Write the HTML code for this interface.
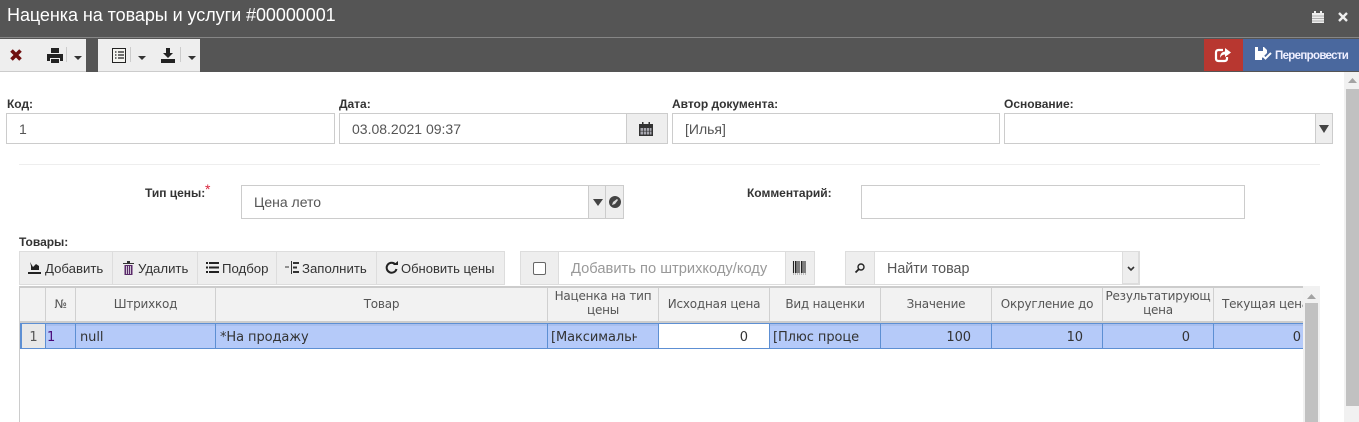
<!DOCTYPE html>
<html lang="ru"><head><meta charset="utf-8"><style>
html,body{margin:0;padding:0;width:1359px;height:422px;overflow:hidden;background:#fff}
body{font-family:"Liberation Sans",sans-serif;color:#333;position:relative}
div,span{position:absolute;box-sizing:border-box;white-space:nowrap}
svg{position:absolute;overflow:visible}
.lb{font-size:12px;font-weight:bold;color:#333;line-height:14px;letter-spacing:-.02px}
.in{border:1px solid #ccc;background:#fff;font-size:14px;color:#555;line-height:30px;padding-left:12px}
.ad{background:#eee;border:1px solid #ccc}
.tb{top:251px;height:34px;background:#eee;border:1px solid #ddd;border-right:0;font-size:13.2px;color:#333;line-height:34px}
.th{top:288px;height:35px;background:#f2f2f2;border-right:1px solid #d0d0d0;border-bottom:2px solid #ccc;font:12px/13.5px "DejaVu Sans",sans-serif;color:#555;text-align:center;overflow:hidden;letter-spacing:-.22px}
.td{top:323px;height:26px;background:#b5caf9;border-right:1px solid #5d8fd3;border-top:1px solid #5d8fd3;border-bottom:1px solid #5d8fd3;box-shadow:inset 0 2px 0 #a9bfee;font:13px/27px "DejaVu Sans",sans-serif;letter-spacing:-.08px;color:#333;padding:0 4px;overflow:hidden}
.r{text-align:right}
.c{left:3px;top:0;width:86px;height:24px;overflow:hidden}
</style></head><body>
<div style="left:0;top:0;width:1359px;height:72px;background:#555"></div>
<div style="left:0;top:37px;width:1359px;height:1px;background:#868686"></div>
<div style="left:7px;top:4px;font-size:18px;line-height:22px;color:#fff;letter-spacing:-.06px">Наценка на товары и услуги #00000001</div>
<svg style="left:1311px;top:11px" width="14" height="13" viewBox="0 0 14 13"><path d="M1 2h12v10H1z" fill="#eee"/><path d="M3 0h2v3H3zM9 0h2v3H9z" fill="#eee"/><path d="M1 5h12M1 7.500h12M1 10h12" stroke="#999" stroke-width=".7"/></svg>
<svg style="left:1338px;top:12px" width="10" height="10" viewBox="0 0 10 10"><path d="M1 1l8 8M9 1l-8 8" stroke="#eee" stroke-width="2.400"/></svg>

<div style="left:0;top:39px;width:86px;height:32px;background:#eee"></div>
<div style="left:98px;top:39px;width:102px;height:32px;background:#eee"></div>
<div style="left:0;top:71px;width:86px;height:1px;background:#ccc"></div><div style="left:98px;top:71px;width:102px;height:1px;background:#ccc"></div>
<svg style="left:10px;top:49px" width="12" height="12" viewBox="0 0 12 12"><path d="M1.500 1.500l9 9M10.500 1.500l-9 9" stroke="#6f0f0f" stroke-width="3.600"/></svg>
<svg style="left:47px;top:48px" width="16" height="16" viewBox="0 0 16 16"><path d="M4 0h8v5H4zM0 6h16v7h-3v-3H3v3H0zM4 11h8v4H4z" fill="#222"/></svg>
<div style="left:66px;top:47px;width:1px;height:15px;background:#ccc"></div>
<svg style="left:74px;top:56px" width="8" height="4"><path d="M0 0h8L4 4z" fill="#333"/></svg>
<svg style="left:112px;top:48px" width="15" height="15" viewBox="0 0 15 15"><path d="M.5.500h13v14H.5z" fill="#f4f4f0" stroke="#222"/><path d="M3 4h1.500M6 4h6M3 7h1.500M6 7h6M3 10h1.500M6 10h6" stroke="#222" stroke-width="1.300"/></svg>
<div style="left:130px;top:47px;width:1px;height:15px;background:#ccc"></div>
<svg style="left:138px;top:56px" width="8" height="4"><path d="M0 0h8L4 4z" fill="#333"/></svg>
<svg style="left:161px;top:48px" width="15" height="15" viewBox="0 0 15 15"><path d="M5 0h4v5h3L7 10 2 5h3zM0 11h14v4H0z" fill="#222"/></svg>
<div style="left:180px;top:47px;width:1px;height:15px;background:#ccc"></div>
<svg style="left:188px;top:56px" width="8" height="4"><path d="M0 0h8L4 4z" fill="#333"/></svg>

<div style="left:1204px;top:39px;width:39px;height:32px;background:#b83730"></div>
<svg style="left:1215px;top:48px" width="16" height="15" viewBox="0 0 16 15"><path d="M8 2H3.500Q1 2 1 4.500v6Q1 13 3.500 13h6q2.500 0 2.500-2.500V9" fill="none" stroke="#fff" stroke-width="2.200"/><path d="M10 0l6 4.500L10 9V6.500Q6.500 6.500 5 10q0-6 5-6.500z" fill="#fff"/></svg>
<div style="left:1243px;top:39px;width:116px;height:32px;background:#4a689e"></div>
<svg style="left:1255px;top:47px" width="17" height="14" viewBox="0 0 17 14"><path d="M0 0h3v4h5V0h1l3 3v3L7 11v2H0z" fill="#fff"/><path d="M8 9l2.500 2.500L16 6" fill="none" stroke="#fff" stroke-width="2"/></svg>
<div style="left:1275px;top:49px;font-size:11.500px;line-height:14px;font-weight:bold;color:#eef;letter-spacing:-.68px">Перепровести</div>

<div style="left:1344px;top:72px;width:15px;height:350px;background:#f1f1f1"></div>
<svg style="left:1348px;top:78px" width="9" height="5"><path d="M0 5h9L4.500 0z" fill="#a3a3a3"/></svg>
<div style="left:1346px;top:89px;width:13px;height:317px;background:#c1c1c1"></div>

<div class="lb" style="left:7px;top:97px">Код:</div>
<div class="in" style="left:6px;top:113px;width:329px;height:31px">1</div>
<div class="lb" style="left:339px;top:97px">Дата:</div>
<div class="in" style="left:339px;top:113px;width:288px;height:31px">03.08.2021 09:37</div>
<div class="ad" style="left:626px;top:113px;width:42px;height:31px"></div>
<svg style="left:639px;top:122px" width="14" height="14" viewBox="0 0 14 14"><path d="M0 2h14v12H0z" fill="#333"/><path d="M3 0h1.500v3H3zM9.500 0H11v3H9.500z" fill="#333"/><path d="M1.500 6h11v6.500h-11z" fill="#a8a8b0"/><path d="M4.500 6v7M7.500 6v7M10.500 6v7M1 9.200h12" stroke="#333" stroke-width=".7"/></svg>
<div class="lb" style="left:672px;top:97px">Автор документа:</div>
<div class="in" style="left:672px;top:113px;width:328px;height:31px">[Илья]</div>
<div class="lb" style="left:1004px;top:97px">Основание:</div>
<div class="in" style="left:1004px;top:113px;width:312px;height:31px"></div>
<div class="ad" style="left:1315px;top:113px;width:18px;height:31px"></div>
<svg style="left:1319px;top:125px" width="10" height="8"><path d="M0 0h10L5 8z" fill="#444"/></svg>
<div style="left:19px;top:164px;width:1301px;height:1px;background:#eee"></div>

<div class="lb" style="left:145px;top:186px">Тип цены:</div>
<div style="left:205px;top:182px;color:#d9243c;font-size:14px;line-height:14px">*</div>
<div class="in" style="left:241px;top:185px;width:349px;height:34px;line-height:32px">Цена лето</div>
<div class="ad" style="left:588px;top:185px;width:18px;height:34px"></div>
<div class="ad" style="left:605px;top:185px;width:19px;height:34px"></div>
<svg style="left:593px;top:199px" width="10" height="7"><path d="M0 0h10L5 7z" fill="#444"/></svg>
<svg style="left:609px;top:196px" width="12" height="12" viewBox="0 0 12 12"><circle cx="6" cy="6" r="6" fill="#444"/><path d="M3 9l1-3 4-3 1 1-3 4z" fill="#ddd"/></svg>
<div class="lb" style="left:747px;top:186px">Комментарий:</div>
<div class="in" style="left:861px;top:185px;width:384px;height:34px"></div>

<div class="lb" style="left:19px;top:235px">Товары:</div>
<div class="tb" style="left:19px;width:94px;padding-left:25px">Добавить</div>
<div class="tb" style="left:112px;width:86px;padding-left:25px">Удалить</div>
<div class="tb" style="left:197px;width:80px;padding-left:24px">Подбор</div>
<div class="tb" style="left:276px;width:101px;padding-left:25px">Заполнить</div>
<div class="tb" style="left:376px;width:129px;padding-left:24px;border-right:1px solid #ddd;font-size:13px">Обновить цены</div>
<svg style="left:28px;top:261px" width="13" height="13" viewBox="0 0 13 13"><path d="M0 11h13v2H0zM3 9h8V5L8 3 5 6 2 1l1 4z" fill="#222"/></svg>
<svg style="left:123px;top:261px" width="11" height="14" viewBox="0 0 11 14"><path d="M0 2h11v1H0zM4 0h3v2H4z" fill="#333"/><path d="M1.500 4h8v10h-8z" fill="#5a2a6a"/><path d="M3.500 5v8M5.500 5v8M7.500 5v8" stroke="#eee" stroke-width=".8"/></svg>
<svg style="left:206px;top:262px" width="13" height="11" viewBox="0 0 13 11"><path d="M0 0h2v2H0zM3 0h10v2H3zM0 4.500h2v2H0zM3 4.500h10v2H3zM0 9h2v2H0zM3 9h10v2H3z" fill="#222"/></svg>
<svg style="left:285px;top:261px" width="14" height="13" viewBox="0 0 14 13"><path d="M0 6h4M6.500 0v13" stroke="#333"/><path d="M8 1h6v2H8zM8 5.500h4v2H8zM8 10h6v2H8z" fill="#333"/></svg>
<svg style="left:385px;top:261px" width="13" height="13" viewBox="0 0 13 13"><path d="M10.500 3.500A5 5 0 1 0 11.500 8" fill="none" stroke="#222" stroke-width="2"/><path d="M8 4h5V0z" fill="#222"/></svg>

<div class="ad" style="left:520px;top:251px;width:39px;height:34px;border-color:#ddd"></div>
<div style="left:533px;top:262px;width:13px;height:13px;border:1px solid #666;border-radius:2px;background:#fff"></div>
<div class="in" style="left:558px;top:251px;width:228px;height:34px;border-color:#ddd;line-height:34px;color:#999;font-size:14.700px">Добавить по штрихкоду/коду</div>
<div class="ad" style="left:785px;top:251px;width:30px;height:34px;border-color:#ddd"></div>
<svg style="left:793px;top:261px" width="13" height="14" viewBox="0 0 13 14"><path d="M.5 0v12M2.500 0v12M4 0v12M6 0v12M8.500 0v12M10 0v12M12 0v12" stroke="#222" stroke-width="1.100"/><path d="M0 13h13" stroke="#888" stroke-dasharray="1 1"/></svg>
<div class="ad" style="left:845px;top:251px;width:30px;height:34px;border-color:#ddd"></div>
<svg style="left:855px;top:263px" width="10" height="10" viewBox="0 0 10 10"><circle cx="6" cy="4" r="3" fill="none" stroke="#222" stroke-width="1.400"/><path d="M4 6L.5 9.500" stroke="#222" stroke-width="1.800"/></svg>
<div class="in" style="left:874px;top:251px;width:249px;height:34px;border-color:#ddd;line-height:34px;font-size:14.300px">Найти товар</div>
<div class="ad" style="left:1122px;top:251px;width:18px;height:34px;border-color:#ddd;border-width:1px 2px 2px 1px"></div>
<svg style="left:1127px;top:266px" width="8" height="6" viewBox="0 0 8 6"><path d="M1 1l3 3 3-3" fill="none" stroke="#333" stroke-width="1.600"/></svg>

<div style="left:19px;top:286px;width:1px;height:136px;background:#ccc"></div>
<div style="left:19px;top:286px;width:1284px;height:2px;background:#ccc"></div>
<div style="left:0;top:0;width:1303px;height:422px;overflow:hidden">
<div class="th" style="left:20px;width:26px"></div>
<div class="th" style="left:46px;width:30px;line-height:33px">№</div>
<div class="th" style="left:76px;width:140px;line-height:33px">Штрихкод</div>
<div class="th" style="left:216px;width:332px;line-height:33px">Товар</div>
<div class="th" style="left:548px;width:111px;padding-top:2px">Наценка на тип<br>цены</div>
<div class="th" style="left:659px;width:111px;line-height:33px">Исходная цена</div>
<div class="th" style="left:770px;width:111px;line-height:33px">Вид наценки</div>
<div class="th" style="left:881px;width:111px;line-height:33px">Значение</div>
<div class="th" style="left:992px;width:111px;line-height:33px">Округление до</div>
<div class="th" style="left:1103px;width:111px;padding-top:2px">Результатирующ<br>цена</div>
<div class="th" style="left:1214px;width:111px;line-height:33px;text-align:left;padding-left:8px">Текущая цена</div>

<div class="td" style="left:20px;width:26px;background:#e8e8e8;text-align:center;border-left:2px solid #5d8fd3;box-shadow:none;padding:0;color:#555">1</div>
<div class="td" style="left:46px;width:30px;padding:0 1px;color:#4a0a7a">1</div>
<div class="td" style="left:76px;width:140px">null</div>
<div class="td" style="left:216px;width:332px">*На продажу</div>
<div class="td" style="left:548px;width:111px"><div class="c">[Максимальная</div></div>
<div class="td r" style="left:659px;width:111px;background:#fff;box-shadow:none;padding-right:21px">0</div>
<div class="td" style="left:770px;width:111px"><div class="c">[Плюс процент</div></div>
<div class="td r" style="left:881px;width:111px;padding-right:20px">100</div>
<div class="td r" style="left:992px;width:111px;padding-right:19px">10</div>
<div class="td r" style="left:1103px;width:111px;padding-right:23px">0</div>
<div class="td r" style="left:1214px;width:89px;border-right:0;padding-right:2px">0</div>
</div>
<div style="left:1303px;top:286px;width:17px;height:136px;background:#f1f1f1"></div>
<svg style="left:1307px;top:294px" width="9" height="5"><path d="M0 5h9L4.500 0z" fill="#a3a3a3"/></svg>
<div style="left:1305px;top:303px;width:13px;height:119px;background:#c1c1c1"></div>
</body></html>
